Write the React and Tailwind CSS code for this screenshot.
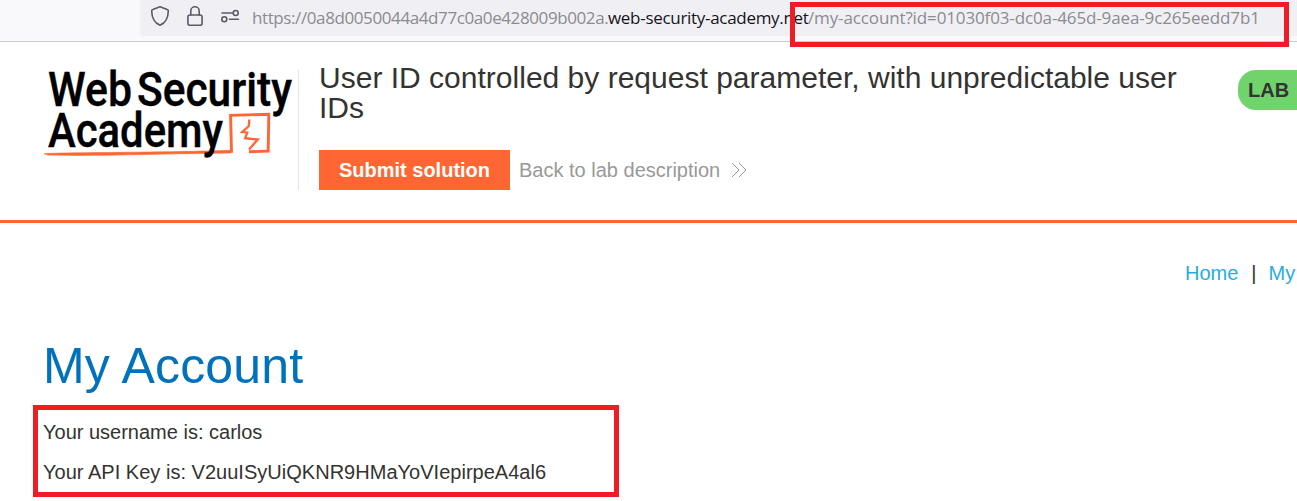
function AddressBar() {
  return (
    <div className="flex h-[42px] shrink-0 border-b border-[#cccccc] bg-[#f9f9fb] pl-[140px]">
      <div className="flex h-9 flex-1 rounded-bl-[4px] bg-[#f0f0f4]">
        <svg className="h-9 w-[112px] shrink-0" viewBox="140 0 112 36" fill="none" stroke="#5b5b66" strokeWidth="1.6" strokeLinecap="round" strokeLinejoin="round">
          <path d="M160 6.8L167.2 9.6Q168.3 10 168.3 11C168.2 17.5 166.3 22.6 160 25.2C153.700 22.6 151.800 17.5 151.700 11Q151.700 10 152.800 9.600Z" />
          <rect x="187.900" y="15" width="14.200" height="10.200" rx="2" />
          <path d="M190.800 15V11a4.200 4.200 0 0 1 8.400 0V15" />
          <path d="M222 13H232.500M229.500 19.300H238.500" />
          <circle cx="235.700" cy="13" r="2.500" />
          <circle cx="224.300" cy="19.300" r="2.500" />
        </svg>
        <div className="flex h-9 whitespace-nowrap font-['Open_Sans',sans-serif] text-[17px] leading-[36px] text-[#8b8b90]">
          <span className="w-[356px] tracking-[-0.4px]">https://0a8d0050044a4d77c0a0e428009b002a.</span>
          <span className="w-[200px] tracking-[-0.3px] text-[#15141a]">web-security-academy.net</span>
          <span className="tracking-[-0.13px]">/my-account?id=01030f03-dc0a-465d-9aea-9c265eedd7b1</span>
        </div>
      </div>
    </div>
  );
}

function Logo() {
  return (
    <svg className="h-[120px] w-[298px] shrink-0" viewBox="0 70 298 120" overflow="visible">
      <path d="M44 153.600C70 152.300 150 152.800 231 150.300V153C160 153.800 90 156.300 48 155.100Z" fill="#ff6633" stroke="#ff6633" strokeWidth="0.6" />
      <path d="M231.500 152.700L230.600 115.400L268.800 114.300L268.200 151L249 151.800" fill="none" stroke="#ff6633" strokeWidth="2.900" />
      <path d="M249.300 119.500L248.800 126L242.300 132L247.200 132.600L245.200 138.200L257.800 139.500L249 149.500" fill="none" stroke="#ff6633" strokeWidth="2.300" />
      <g className="font-['Roboto',sans-serif]" fontSize="47.5" fontWeight="500" fill="#000000" stroke="#000000" strokeWidth="0.4">
        <text x="48" y="105.700" textLength="84" lengthAdjust="spacingAndGlyphs">Web</text>
        <text x="137" y="105.700" textLength="155" lengthAdjust="spacingAndGlyphs">Security</text>
        <text x="48" y="146.700" textLength="175" lengthAdjust="spacingAndGlyphs">Academy</text>
      </g>
    </svg>
  );
}

export default function App() {
  return (
    <div className="relative flex h-[501px] w-[1297px] flex-col overflow-hidden bg-white font-['Liberation_Sans',Arial,sans-serif] text-[20px] text-[#333332]">
      <AddressBar />
      <header className="flex h-[181px] shrink-0 border-b-[3px] border-[#ff6633] pt-7">
        <Logo />
        <div className="h-[120px] w-px shrink-0 bg-[#e5e5e5]" />
        <div className="-mt-[7px] ml-5 flex w-[919px] shrink-0 flex-col">
          <h2 className="w-[880px] text-[30px] leading-[30px] tracking-[0.01px]">User ID controlled by request parameter, with unpredictable user IDs</h2>
          <div className="mt-[27px] flex h-10 items-center">
            <button className="h-10 w-[191px] bg-[#ff6633] font-bold text-white">Submit solution</button>
            <a className="ml-[9px] text-[#999999]">Back to lab description</a>
            <svg className="ml-[11px] h-4 w-4" viewBox="0 0 16 16" fill="none" stroke="#999999" strokeWidth="1">
              <path d="M1 1L8 8L1 15M8 1L15 8L8 15" />
            </svg>
          </div>
        </div>
        <div className="flex h-10 w-[100px] shrink-0 items-center rounded-l-[18px] bg-[#71d36c] pl-[10px] font-bold">LAB</div>
      </header>
      <main className="flex flex-col">
        <nav className="mt-[35px] flex h-[30px] items-center whitespace-nowrap pl-[1185px] leading-[30px] text-[#29abe2]">
          <a>Home</a>
          <span className="ml-[13px] text-[#333332]">|</span>
          <a className="ml-[12px]">My</a>
        </nav>
        <h1 className="ml-[43px] mt-[48px] h-[60px] whitespace-nowrap text-[50px] leading-[60px] tracking-[0.2px] text-[#0071bc]">My Account</h1>
        <section className="ml-[33px] mt-[9px] flex h-[92px] w-[586px] flex-col border-[5px] border-[#ee1c25] pl-[5px] pt-[2px] leading-[40px]">
          <p>Your username is: carlos</p>
          <p className="tracking-[0.02px]">Your API Key is: V2uuISyUiQKNR9HMaYoVIepirpeA4al6</p>
        </section>
      </main>
      <div className="absolute left-[790px] top-[2px] h-[45px] w-[499px] border-[5px] border-[#ee1c25]" />
    </div>
  );
}
